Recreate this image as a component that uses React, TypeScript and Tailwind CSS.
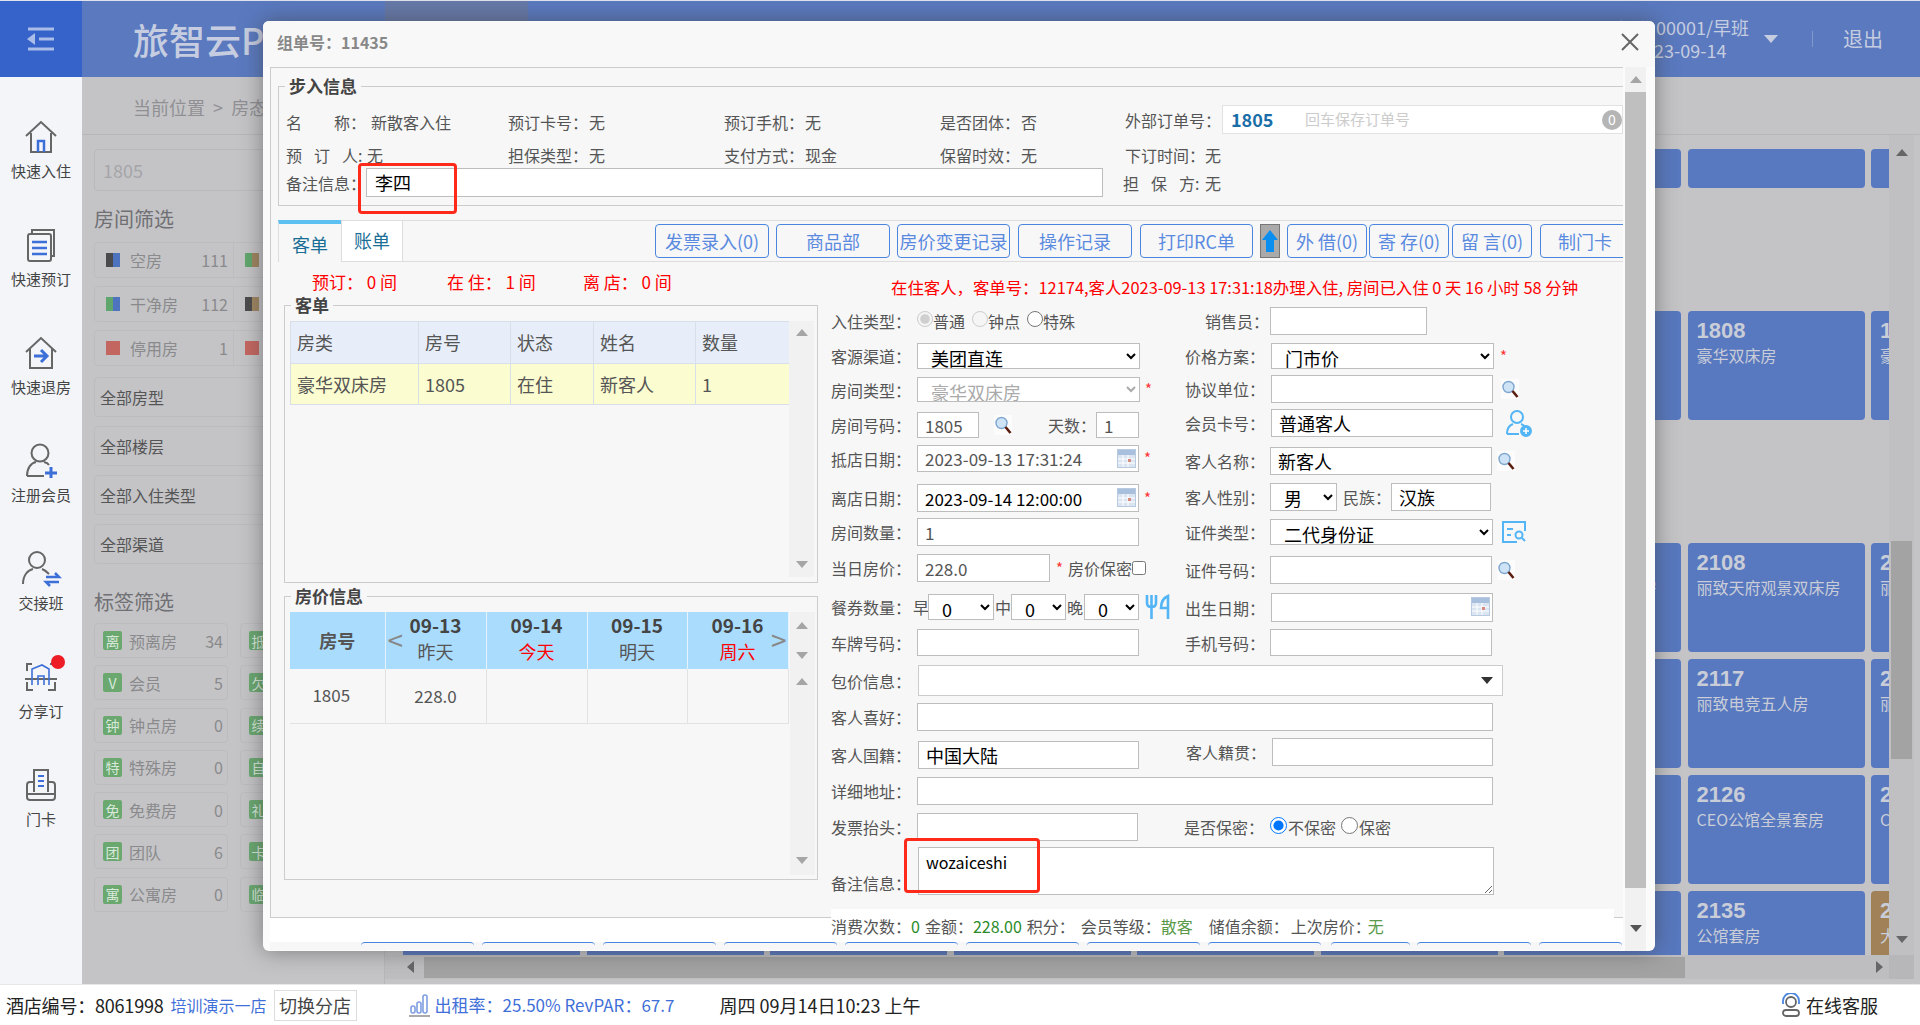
import React from 'react';

const FONT = { fontFamily: '"Noto Sans CJK SC", "Noto Sans", sans-serif' };

const inputCls =
  'h-full border border-[#bdbdbd] bg-white px-[7px] text-[17px] leading-none text-[#555] outline-none';
const selectBase = 'h-full border border-[#bdbdbd] bg-white pl-[9px] text-[18px] leading-none outline-none';
const selectCls = `${selectBase} text-black`;

const sideIcons: Record<string, React.ReactNode> = {
  home: (
    <svg width="34" height="34" viewBox="0 0 34 34" fill="none" stroke="#666" strokeWidth="2">
      <path d="M2 16 17 2l15 14M7 13v19h20V13" />
      <path d="M14 32V21h6v11" stroke="#3d6fd8" strokeWidth="2.5" />
    </svg>
  ),
  book: (
    <svg width="30" height="34" viewBox="0 0 30 34" fill="none" stroke="#666" strokeWidth="2">
      <path d="M6 5V2h22v26h-3" />
      <rect x="2" y="6" width="23" height="27" rx="2" />
      <path d="M6 14h15M6 20h15M6 26h15" stroke="#3d6fd8" strokeWidth="2.5" />
    </svg>
  ),
  out: (
    <svg width="34" height="34" viewBox="0 0 34 34" fill="none" stroke="#666" strokeWidth="2">
      <path d="M2 16 17 2l15 14M6 13v19h22V13" />
      <path d="M10 20h12M17 14l6 6-6 6" stroke="#3d6fd8" strokeWidth="3" />
    </svg>
  ),
  member: (
    <svg width="34" height="36" viewBox="0 0 34 36" fill="none" stroke="#666" strokeWidth="2">
      <circle cx="16" cy="10" r="8.5" />
      <path d="M3 33c0-8 4-13 9-14M20 19c2 .5 4 1.5 5 3M3 33h17" />
      <path d="M27 24v11M21 30h12" stroke="#3d6fd8" strokeWidth="3" />
    </svg>
  ),
  shift: (
    <svg width="42" height="36" viewBox="0 0 42 36" fill="none" stroke="#666" strokeWidth="2">
      <circle cx="17" cy="9" r="8" />
      <path d="M3 33c0-9 5-14 10-15M22 18c3 1 5 3 7 5" />
      <path d="M26 26h13l-4-4M39 31H26l4 4" stroke="#3d6fd8" strokeWidth="2.5" />
    </svg>
  ),
  share: (
    <svg width="34" height="32" viewBox="0 0 34 32" fill="none" stroke="#666" strokeWidth="2">
      <path d="M8 3H3v7M3 21v8h6M24 29h7v-8M30 6V3h-4M1 18h32" />
      <path d="M8 24V8l10-4 7 4v16M14 24v-9h6v9" stroke="#3d6fd8" strokeWidth="1.6" />
    </svg>
  ),
  card: (
    <svg width="34" height="34" viewBox="0 0 34 34" fill="none" stroke="#666" strokeWidth="2">
      <path d="M10 24V2h14v22" />
      <path d="M10 14H6q-3 0-3 3v12q0 3 3 3h22q3 0 3-3V17q0-3-3-3h-4M3 26h28" />
      <path d="M14 8h6M14 13h6M14 18h6" stroke="#3d6fd8" strokeWidth="2" />
    </svg>
  ),
};

const sideItems = [
  ['home', '快速入住'],
  ['book', '快速预订'],
  ['out', '快速退房'],
  ['member', '注册会员'],
  ['shift', '交接班'],
  ['share', '分享订'],
  ['card', '门卡'],
];

const statusRows = [
  ['bg-[#4b4b4d]', 'bg-[#4e74c0]', '空房', '111', 'bg-[#5fa66c]', 'bg-[#9f8560]'],
  ['bg-[#5fa66c]', 'bg-[#4e74c0]', '干净房', '112', 'bg-[#4b4b4d]', 'bg-[#9f8560]'],
  ['bg-[#c46660]', 'bg-[#c46660]', '停用房', '1', 'bg-[#c46660]', 'bg-[#c46660]'],
];

const tagRows = [
  ['离', '预离房', '34', '抵'],
  ['V', '会员', '5', '欠'],
  ['钟', '钟点房', '0', '续'],
  ['特', '特殊房', '0', '自'],
  ['免', '免费房', '0', '礼'],
  ['团', '团队', '6', '卡'],
  ['寓', '公寓房', '0', '临'],
];

function SearchIcon() {
  return (
    <svg width="18" height="20" viewBox="0 0 18 20" className="shrink-0">
      <rect width="18" height="20" fill="#fff" opacity="0.6" />
      <circle cx="7.5" cy="8" r="5.5" fill="#cfe3f6" stroke="#7ea6cf" strokeWidth="1.4" />
      <path d="m11.5 12 5 6" stroke="#5a1d0e" strokeWidth="2.6" />
    </svg>
  );
}

function CalendarIcon() {
  return (
    <svg width="19" height="19" viewBox="0 0 19 19" className="absolute right-[3px] top-[4px]">
      <rect x="0.5" y="0.5" width="18" height="18" fill="#dbe5f1" stroke="#b8cadf" />
      <rect x="1" y="1" width="17" height="5" fill="#a8c0de" />
      <path d="M1 10h17M1 14h17M6 6v12M11 6v12" stroke="#fff" strokeWidth="1" />
      <rect x="11" y="10" width="3" height="3" fill="#d98a80" />
    </svg>
  );
}

function Arrow({ dir, color = '#a5a5a5' }: { dir: 'up' | 'down' | 'left' | 'right'; color?: string }) {
  const d = { up: 'M0 9 6 2l6 7z', down: 'M0 2h12L6 9z', left: 'M9 0v12L2 6z', right: 'M2 0v12l7-6z' }[dir];
  return (
    <svg width="12" height="12" viewBox="0 0 12 12">
      <path d={d} fill={color} />
    </svg>
  );
}

function Info({ label, value, w, lw }: { label: React.ReactNode; value?: string; w: string; lw: string }) {
  return (
    <div className={`flex items-center ${w}`}>
      <span className={`shrink-0 whitespace-nowrap ${lw}`}>{label}</span>
      <span>{value}</span>
    </div>
  );
}

function Row({
  label,
  className,
  children,
  labelCls = 'w-[86px]',
}: {
  label: string;
  className: string;
  children: React.ReactNode;
  labelCls?: string;
}) {
  return (
    <div className={`flex items-center ${className}`}>
      <span className={`shrink-0 whitespace-nowrap text-[16px] text-[#555] ${labelCls}`}>{label}：</span>
      {children}
    </div>
  );
}

const Star = ({ cls = 'ml-[5px]' }: { cls?: string }) => <span className={`${cls} text-[15px] text-[#f33]`}>*</span>;

function Legend({ children }: { children: React.ReactNode }) {
  return <legend className="ml-[6px] px-[4px] text-[17px] font-bold leading-[24px] text-[#444]">{children}</legend>;
}

function Track({ cls, children }: { cls: string; children: React.ReactNode }) {
  return <div className={`flex w-[25px] flex-col items-center bg-[#f1f1f1] ${cls}`}>{children}</div>;
}

const roomCols = [
  { date: '09-13', sub: '昨天', red: false },
  { date: '09-14', sub: '今天', red: true },
  { date: '09-15', sub: '明天', red: false },
  { date: '09-16', sub: '周六', red: true },
];

const actionBtns = [
  ['发票录入(0)', 'ml-[252px] w-[114px]'],
  ['商品部', 'ml-[7px] w-[114px]'],
  ['房价变更记录', 'ml-[7px] w-[113px]'],
  ['操作记录', 'ml-[8px] w-[114px]'],
  ['打印RC单', 'ml-[8px] w-[113px]'],
];
const actionBtns2 = [
  ['外 借(0)', 'ml-[7px] w-[80px]'],
  ['寄 存(0)', 'ml-[2px] w-[80px]'],
  ['留 言(0)', 'ml-[3px] w-[80px]'],
  ['制门卡', 'ml-[8px] w-[90px]'],
];

const lowerBtns = [
  'ml-[91px] w-[113px]',
  'ml-[8px] w-[113px]',
  'ml-[8px] w-[113px]',
  'ml-[8px] w-[113px]',
  'ml-[8px] w-[113px]',
  'ml-[8px] w-[113px]',
  'ml-[8px] w-[113px]',
  'ml-[8px] w-[113px]',
  'ml-[10px] w-[79px]',
  'ml-[7px] w-[114px]',
  'ml-[8px] w-[83px]',
];

function Dialog() {
  return (
    <div className="absolute left-[263px] top-[21px] h-[930px] w-[1392px] overflow-hidden rounded-[6px] bg-[#fbfbfb] shadow-[0_0_22px_rgba(60,60,60,0.55)]">
      {/* title */}
      <div className="flex h-[46px] items-center justify-between bg-[#f8f8f8] pb-[4px] pl-[14px] pr-[15px]">
        <span className="text-[16px] font-bold text-[#888]">组单号：11435</span>
        <svg width="20" height="20" viewBox="0 0 20 20" stroke="#666" strokeWidth="2">
          <path d="m2 2 16 16M18 2 2 18" />
        </svg>
      </div>

      <div className="flex">
        <div className="ml-[7px] w-[1353px]">
          {/* frame */}
          <div className="h-[851px] w-[1353px] overflow-hidden border-l border-t border-b border-[#ccc] bg-[#f7f7f7]">
            <fieldset className="ml-[7px] mt-[6px] h-[132px] w-[1350px] border-t border-b border-l border-[#ccc] text-[16px] text-[#555]">
              <Legend>步入信息</Legend>
              <div className="flex h-[36px] pl-[7px] pt-[11px]">
                <Info label="名　　称：" value="新散客入住" w="w-[222px]" lw="w-[85px]" />
                <Info label="预订卡号：" value="无" w="w-[216px]" lw="w-[81px]" />
                <Info label="预订手机：" value="无" w="w-[216px]" lw="w-[81px]" />
                <Info label="是否团体：" value="否" w="w-[185px]" lw="w-[81px]" />
                <div className="-mt-[4px] flex items-center">
                  <span className="w-[97px] whitespace-nowrap">外部订单号：</span>
                  <div className="flex h-[29px] w-[401px] items-center border border-[#e2e2e2] bg-white pl-[8px]">
                    <span className="w-[74px] text-[18px] font-bold text-[#1a6ea8]">1805</span>
                    <span className="text-[15px] text-[#ccc]">回车保存订单号</span>
                    <span className="ml-auto flex h-[20px] w-[20px] items-center justify-center rounded-full bg-[#b5b5b5] text-[14px] text-white">
                      0
                    </span>
                  </div>
                </div>
              </div>
              <div className="flex h-[32px] pl-[7px] pt-[9px]">
                <Info
                  label={
                    <>
                      <span className="tracking-[12px]">预订</span>人:
                    </>
                  }
                  value="无"
                  w="w-[222px]"
                  lw="w-[81px]"
                />
                <Info label="担保类型：" value="无" w="w-[216px]" lw="w-[81px]" />
                <Info label="支付方式：" value="现金" w="w-[216px]" lw="w-[81px]" />
                <Info label="保留时效：" value="无" w="w-[185px]" lw="w-[81px]" />
                <Info label="下订时间：" value="无" w="w-[160px]" lw="w-[80px]" />
              </div>
              <div className="mt-[2px] flex h-[29px] items-center pl-[7px]">
                <span className="w-[80px] whitespace-nowrap">备注信息：</span>
                <div className="flex h-full w-[737px] items-center border border-[#bdbdbd] bg-white pl-[8px] text-[18px] text-black">
                  李四
                </div>
                <Info
                  label={
                    <>
                      <span className="tracking-[12px]">担保</span>方:
                    </>
                  }
                  value="无"
                  w="ml-[20px] w-[160px]"
                  lw="w-[82px]"
                />
              </div>
            </fieldset>

            {/* tabs and action buttons */}
            <div className="ml-[7px] mt-[14px] flex h-[42px] border-b border-t border-[#ddd]">
              <div className="-mb-px -mt-px flex w-[63px] shrink-0 items-center justify-center border-t-[4px] border-l border-[#5cc0f0] border-l-[#ddd] bg-[#f7f7f7] pt-[3px] text-[18px] text-[#1a6e96]">
                客单
              </div>
              <div className="flex w-[62px] shrink-0 items-center justify-center border-l border-r border-[#ddd] bg-white pb-[2px] text-[18px] text-[#1a6e96]">
                账单
              </div>
              {actionBtns.map(([t, cls]) => (
                <div
                  key={t}
                  className={`mt-[3px] flex h-[34px] shrink-0 items-center justify-center whitespace-nowrap rounded-[4px] border border-[#4a86e0] text-[18px] text-[#5a8ae0] ${cls}`}
                >
                  {t}
                </div>
              ))}
              <div className="ml-[7px] mt-[3px] flex h-[34px] w-[20px] shrink-0 items-center justify-center border border-[#777] bg-[#aaa]">
                <svg width="16" height="24" viewBox="0 0 16 24">
                  <path d="M8 1 16 11h-4v12H4V11H0z" fill="#0a8ef0" />
                </svg>
              </div>
              {actionBtns2.map(([t, cls]) => (
                <div
                  key={t}
                  className={`mt-[3px] flex h-[34px] shrink-0 items-center justify-center whitespace-nowrap rounded-[4px] border border-[#4a86e0] text-[18px] text-[#5a8ae0] ${cls}`}
                >
                  {t}
                </div>
              ))}
            </div>

            <div className="flex">
              {/* left column */}
              <div className="w-[547px] shrink-0 pl-[13px]">
                <div className="flex h-[31px] items-end pl-[28px] text-[17px] leading-[22px] text-[#f00]">
                  <span className="w-[135px]">预订： 0 间</span>
                  <span className="w-[136px]">在 住： 1 间</span>
                  <span>离 店： 0 间</span>
                </div>
                <fieldset className="h-[290px] w-[534px] border border-[#ccc]">
                  <Legend>客单</Legend>
                  <div className="flex pl-[5px] pt-[4px]">
                    <table className="h-[83px] w-[499px] table-fixed border-collapse self-start text-[18px] text-[#555]">
                      <colgroup>
                        <col className="w-[128px]" />
                        <col className="w-[92px]" />
                        <col className="w-[83px]" />
                        <col className="w-[102px]" />
                        <col className="w-[94px]" />
                      </colgroup>
                      <thead>
                        <tr className="h-[42px] bg-[#e7eef9]">
                          {['房类', '房号', '状态', '姓名', '数量'].map((h) => (
                            <th key={h} className="border border-[#d9dfe8] pl-[6px] text-left font-normal">
                              {h}
                            </th>
                          ))}
                        </tr>
                      </thead>
                      <tbody>
                        <tr className="h-[41px] bg-[#fbfccf]">
                          {['豪华双床房', '1805', '在住', '新客人', '1'].map((c) => (
                            <td key={c} className="whitespace-nowrap border border-[#d9dfe8] pl-[6px]">
                              {c}
                            </td>
                          ))}
                        </tr>
                      </tbody>
                    </table>
                    <Track cls="-ml-px h-[256px] justify-between py-[6px]">
                      <Arrow dir="up" />
                      <Arrow dir="down" />
                    </Track>
                  </div>
                </fieldset>
                <fieldset className="mt-[1px] h-[296px] w-[534px] border border-[#ccc]">
                  <Legend>房价信息</Legend>
                  <div className="flex pl-[5px] pt-[4px]">
                    <table className="h-[111px] w-[498px] table-fixed border-collapse self-start text-[#555]">
                      <colgroup>
                        <col className="w-[95px]" />
                        <col className="w-[101px]" />
                        <col className="w-[101px]" />
                        <col className="w-[100px]" />
                        <col className="w-[101px]" />
                      </colgroup>
                      <thead>
                        <tr className="h-[57px] bg-[#aadcfd]">
                          <th className="border-r border-[#e4f3fe] text-[18px] font-bold">房号</th>
                          {roomCols.map((c, i) => (
                            <th
                              key={c.date}
                              className="relative border-r border-[#e4f3fe] text-center align-top text-[18px] font-normal leading-[26px]"
                            >
                              <div className="text-[19px] font-bold text-[#444]">{c.date}</div>
                              <div className={c.red ? 'text-[#f00]' : 'text-[#555]'}>{c.sub}</div>
                              {i === 0 && (
                                <span className="absolute left-[2px] top-[13px] text-[28px] leading-[28px] text-[#888]">
                                  &lt;
                                </span>
                              )}
                              {i === 3 && (
                                <span className="absolute right-[1px] top-[13px] text-[28px] leading-[28px] text-[#888]">
                                  &gt;
                                </span>
                              )}
                            </th>
                          ))}
                        </tr>
                      </thead>
                      <tbody>
                        <tr className="h-[54px] border-b border-[#e2e2e2] text-[17px]">
                          <td className="border-r border-[#e2e2e2] pb-[2px] pr-[12px] text-center">1805</td>
                          <td className="border-r border-[#e2e2e2] text-center">228.0</td>
                          <td className="border-r border-[#e2e2e2]" />
                          <td className="border-r border-[#e2e2e2]" />
                          <td className="border-r border-[#e2e2e2]" />
                        </tr>
                      </tbody>
                    </table>
                    <Track cls="ml-px h-[263px] pt-[8px]">
                      <Arrow dir="up" />
                      <div className="mt-[18px]">
                        <Arrow dir="down" />
                      </div>
                      <div className="mt-[14px]">
                        <Arrow dir="up" />
                      </div>
                      <div className="mt-auto pb-[8px]">
                        <Arrow dir="down" />
                      </div>
                    </Track>
                  </div>
                </fieldset>
              </div>

              {/* right column */}
              <div className="w-[800px] shrink-0 pl-[13px]">
                <div className="flex h-[36px] items-end whitespace-nowrap pl-[60px] text-[16.4px] leading-[22px] text-[#f00]">
                  在住客人，客单号：12174,客人2023-09-13 17:31:18办理入住, 房间已入住 0 天 16 小时 58 分钟
                </div>
                <div className="mt-[9px] flex">
                  <div className="w-[354px]">
                    <Row label="入住类型" className="h-[28px]">
                      <div className="flex items-center text-[16px] text-[#555]">
                        <input type="radio" disabled defaultChecked name="t" className="m-0 mb-[4px] h-[16px] w-[16px]" />
                        <span className="w-[39px]">普通</span>
                        <input type="radio" disabled name="t" className="m-0 mb-[4px] h-[16px] w-[16px]" />
                        <span className="w-[39px]">钟点</span>
                        <input type="radio" name="t2" className="m-0 mb-[4px] h-[16px] w-[16px]" />
                        <span>特殊</span>
                      </div>
                    </Row>
                    <Row label="客源渠道" className="mt-[8px] h-[26px]">
                      <select className={`${selectCls} w-[223px]`} defaultValue="美团直连">
                        <option>美团直连</option>
                      </select>
                    </Row>
                    <Row label="房间类型" className="mt-[8px] h-[25px]">
                      <select disabled className={`${selectBase} w-[223px] text-[#aaa]`} defaultValue="豪华双床房">
                        <option>豪华双床房</option>
                      </select>
                      <Star />
                    </Row>
                    <Row label="房间号码" className="mt-[10px] h-[26px]">
                      <input readOnly value="1805" className={`${inputCls} w-[62px]`} />
                      <div className="ml-[15px]">
                        <SearchIcon />
                      </div>
                      <span className="ml-[36px] w-[48px] whitespace-nowrap text-[16px] text-[#555]">天数：</span>
                      <input readOnly value="1" className={`${inputCls} w-[43px]`} />
                    </Row>
                    <Row label="抵店日期" className="mt-[7px] h-[27px]">
                      <div className="relative h-full w-[222px]">
                        <input readOnly value="2023-09-13 17:31:24" className={`${inputCls} w-full text-[16px]`} />
                        <CalendarIcon />
                      </div>
                      <Star />
                    </Row>
                    <Row label="离店日期" className="mt-[12px] h-[28px]">
                      <div className="relative h-full w-[222px]">
                        <input
                          readOnly
                          value="2023-09-14 12:00:00"
                          className={`${inputCls} w-full border-[#777] text-[16px] text-black`}
                        />
                        <CalendarIcon />
                      </div>
                      <Star />
                    </Row>
                    <Row label="房间数量" className="mt-[6px] h-[28px]">
                      <input readOnly value="1" className={`${inputCls} w-[222px]`} />
                    </Row>
                    <Row label="当日房价" className="mt-[8px] h-[28px]">
                      <input readOnly value="228.0" className={`${inputCls} w-[133px]`} />
                      <Star cls="ml-[6px]" />
                      <span className="ml-[5px] whitespace-nowrap text-[16px] text-[#555]">房价保密</span>
                      <input type="checkbox" className="m-0 h-[14px] w-[14px]" />
                    </Row>
                    <Row label="餐券数量" labelCls="w-[82px]" className="mt-[12px] h-[26px] text-[16px] text-[#555]">
                      <span className="w-[15px]">早</span>
                      <select className={`${selectCls} w-[66px]`}>
                        <option>0</option>
                      </select>
                      <span className="ml-px w-[16px]">中</span>
                      <select className={`${selectCls} w-[55px]`}>
                        <option>0</option>
                      </select>
                      <span className="ml-px w-[17px]">晚</span>
                      <select className={`${selectCls} w-[55px]`}>
                        <option>0</option>
                      </select>
                      <svg width="27" height="26" viewBox="0 0 27 26" fill="none" stroke="#53b5f5" strokeWidth="2.6" className="ml-[6px]">
                        <path d="M2 1v8q0 4 4.500 4t4.500-4V1M6.500 1v24M23 25V2q-7 3-7 12h7" />
                      </svg>
                    </Row>
                    <Row label="车牌号码" className="mt-[9px] h-[27px]">
                      <input readOnly value="" className={`${inputCls} w-[222px]`} />
                    </Row>
                  </div>
                  <div className="w-[360px]">
                    <Row label="销售员" labelCls="w-[85px] pl-[20px]" className="h-[28px]">
                      <input readOnly value="" className={`${inputCls} w-[157px]`} />
                    </Row>
                    <Row label="价格方案" className="mt-[8px] h-[26px]">
                      <select className={`${selectCls} w-[223px]`}>
                        <option>门市价</option>
                      </select>
                      <Star cls="ml-[6px]" />
                    </Row>
                    <Row label="协议单位" className="mt-[6px] h-[28px]">
                      <input readOnly value="" className={`${inputCls} w-[222px]`} />
                      <div className="ml-[8px]">
                        <SearchIcon />
                      </div>
                    </Row>
                    <Row label="会员卡号" className="mt-[6px] h-[28px]">
                      <input readOnly value="普通客人" className={`${inputCls} w-[222px] text-[18px] text-black`} />
                      <svg width="28" height="28" viewBox="0 0 28 28" fill="none" stroke="#53b5f5" strokeWidth="2" className="ml-[12px]">
                        <circle cx="12" cy="8" r="6" />
                        <path d="M2 25q0-8 6-10M16 15q3 1 4 3M2 25h12" />
                        <circle cx="21" cy="22" r="5" fill="#53b5f5" />
                        <path d="M21 19v6M18 22h6" stroke="#fff" strokeWidth="1.5" />
                      </svg>
                    </Row>
                    <Row label="客人名称" labelCls="w-[85px]" className="mt-[10px] h-[28px]">
                      <input readOnly value="新客人" className={`${inputCls} w-[222px] text-[18px] text-black`} />
                      <div className="ml-[5px]">
                        <SearchIcon />
                      </div>
                    </Row>
                    <Row label="客人性别" labelCls="w-[85px]" className="mt-[8px] h-[28px] text-[#555]">
                      <select className={`${selectCls} w-[67px]`}>
                        <option>男</option>
                      </select>
                      <span className="ml-[6px] w-[48px] whitespace-nowrap text-[16px]">民族：</span>
                      <input readOnly value="汉族" className={`${inputCls} w-[100px] text-[18px] text-black`} />
                    </Row>
                    <Row label="证件类型" labelCls="w-[85px]" className="mt-[8px] h-[26px]">
                      <select className={`${selectCls} w-[223px]`}>
                        <option>二代身份证</option>
                      </select>
                      <svg width="26" height="26" viewBox="0 0 26 26" fill="none" stroke="#53b5f5" strokeWidth="2" className="ml-[8px]">
                        <path d="M24 12V3H2v20h14" />
                        <path d="M6 10h6M6 16h4" />
                        <circle cx="18" cy="16" r="3.5" />
                        <path d="m21 19 3 3" />
                      </svg>
                    </Row>
                    <Row label="证件号码" labelCls="w-[85px]" className="mt-[11px] h-[28px]">
                      <input readOnly value="" className={`${inputCls} w-[222px]`} />
                      <div className="ml-[5px]">
                        <SearchIcon />
                      </div>
                    </Row>
                    <Row label="出生日期" className="mt-[9px] h-[29px]">
                      <div className="relative h-full w-[222px]">
                        <input readOnly value="" className={`${inputCls} w-full border-[#999]`} />
                        <CalendarIcon />
                      </div>
                    </Row>
                    <Row label="手机号码" labelCls="w-[85px]" className="mt-[7px] h-[27px]">
                      <input readOnly value="" className={`${inputCls} w-[222px]`} />
                    </Row>
                  </div>
                </div>

                <Row label="包价信息" labelCls="w-[87px]" className="mt-[9px] h-[31px]">
                  <div className="flex h-full w-[585px] items-center justify-end border border-[#ccc] bg-white pr-[9px]">
                    <Arrow dir="down" color="#333" />
                  </div>
                </Row>
                <Row label="客人喜好" className="mt-[7px] h-[28px]">
                  <input readOnly value="" className={`${inputCls} w-[576px]`} />
                </Row>
                <div className="mt-[7px] flex h-[31px]">
                  <Row label="客人国籍" labelCls="w-[87px]" className="h-[28px] self-end">
                    <input readOnly value="中国大陆" className={`${inputCls} w-[221px] text-[18px] text-black`} />
                  </Row>
                  <Row label="客人籍贯" labelCls="ml-[47px] w-[86px]" className="h-[28px]">
                    <input readOnly value="" className={`${inputCls} w-[221px]`} />
                  </Row>
                </div>
                <Row label="详细地址" className="mt-[8px] h-[28px]">
                  <input readOnly value="" className={`${inputCls} w-[576px]`} />
                </Row>
                <Row label="发票抬头" className="mt-[8px] h-[28px]">
                  <input readOnly value="" className={`${inputCls} w-[221px]`} />
                  <span className="ml-[46px] w-[86px] whitespace-nowrap text-[16px] text-[#555]">是否保密：</span>
                  <div className="flex items-center text-[16px] text-[#555]">
                    <input type="radio" defaultChecked name="m" className="m-0 mb-[4px] h-[17px] w-[17px]" />
                    <span className="ml-px w-[53px]">不保密</span>
                    <input type="radio" name="m" className="m-0 mb-[4px] h-[17px] w-[17px]" />
                    <span className="ml-px">保密</span>
                  </div>
                </Row>
                <div className="mt-[6px] flex h-[48px] items-end">
                  <span className="w-[87px] whitespace-nowrap text-[16px] text-[#555]">备注信息：</span>
                  <textarea
                    readOnly
                    value="wozaiceshi"
                    className="h-full w-[576px] resize border border-[#bdbdbd] bg-white px-[7px] py-[3px] text-[16px] leading-[22px] text-black outline-none"
                  />
                </div>
              </div>
            </div>
          </div>
          {/* lower strip, buttons cut by the dialog edge */}
          <div className="h-[24px] bg-white" />
          <div className="flex h-[8px] overflow-hidden bg-[#f7f7f7]">
            {lowerBtns.map((cls, i) => (
              <div key={i} className={`h-[20px] shrink-0 rounded-t-[4px] border-t border-[#4a86e0] ${cls}`} />
            ))}
          </div>
        </div>

        {/* dialog scrollbar */}
        <div className="ml-[2px] flex h-[884px] w-[21px] flex-col items-center bg-[#f1f1f1]">
          <div className="flex h-[25px] items-center">
            <Arrow dir="up" />
          </div>
          <div className="h-[796px] w-full bg-[#bfbfbf]" />
          <div className="mt-auto flex h-[44px] items-center">
            <Arrow dir="down" color="#555" />
          </div>
        </div>
      </div>

      {/* summary strip over the frame */}
      <div className="absolute left-[568px] top-[888px] flex h-[33px] w-[783px] items-center whitespace-nowrap bg-white text-[16px] text-[#555]">
        <span>消费次数：</span>
        <span className="text-[#2a8a2a]">0</span>
        <span className="ml-[5px]">金额：</span>
        <span className="text-[#2a8a2a]">228.00</span>
        <span className="ml-[5px] w-[54px]">积分：</span>
        <span>会员等级：</span>
        <span className="text-[#5a9a4a]">散客</span>
        <span className="ml-[16px] w-[82px]">储值余额：</span>
        <span>上次房价：</span>
        <span className="-ml-[3px] text-[#5a9a4a]">无</span>
      </div>

      {/* annotations */}
      <div className="absolute left-[95px] top-[142px] h-[51px] w-[99px] rounded-[4px] border-[3px] border-[#ff2a1a]" />
      <div className="absolute left-[641px] top-[817px] h-[55px] w-[136px] rounded-[4px] border-[3px] border-[#ff2a1a]" />
    </div>
  );
}

const cardRows = [
  { cls: 'mt-0 h-[39px]', cards: [['', ''], ['', ''], ['', '']], brown: false },
  { cls: 'mt-[123px] h-[109px]', cards: [['', ''], ['1808', '豪华双床房'], ['1809', '豪华双床房']], brown: false },
  { cls: 'mt-[123px] h-[109px]', cards: [['2107', '丽致天府观景双床房'], ['2108', '丽致天府观景双床房'], ['2109', '丽致天府']], brown: false },
  { cls: 'mt-[7px] h-[109px]', cards: [['', ''], ['2117', '丽致电竞五人房'], ['2118', '丽致电竞']], brown: false },
  { cls: 'mt-[7px] h-[109px]', cards: [['', ''], ['2126', 'CEO公馆全景套房'], ['2127', 'CEO公馆']], brown: false },
  { cls: 'mt-[7px] h-[109px]', cards: [['', ''], ['2135', '公馆套房'], ['2136', '大床房']], brown: true },
];

function RoomCard({ no, name, brown }: { no: string; name: string; brown?: boolean }) {
  return (
    <div className={`h-full overflow-hidden rounded-[4px] pl-[9px] pt-[7px] text-[#c9cdd8] ${brown ? 'bg-[#a08158]' : 'bg-[#5878bf]'}`}>
      <div className="text-[22px] font-bold leading-[26px]" style={{ fontFamily: '"Liberation Sans", sans-serif' }}>
        {no}
      </div>
      <div className="whitespace-nowrap text-[16px] leading-[22px]">{name}</div>
    </div>
  );
}

export default function App() {
  return (
    <div className="relative h-[1025px] w-[1920px] overflow-hidden bg-white" style={FONT}>
      <div className="h-px bg-[#dfe3ee]" />
      <div className="flex h-[983px]">
        {/* side nav */}
        <aside className="w-[82px] shrink-0 bg-[#f3f5f9]">
          <div className="flex h-[76px] items-center justify-center bg-[#3563c9]">
            <svg width="30" height="24" viewBox="0 0 30 24" fill="none" stroke="#a9bde8" strokeWidth="3">
              <path d="M2 2h26M13 12h15M2 22h26" />
              <path d="M9 6v12l-8-6z" fill="#a9bde8" stroke="none" />
            </svg>
          </div>
          <div className="mt-[38px]">
            {sideItems.map(([key, label]) => (
              <div key={key} className="relative flex h-[108px] flex-col items-center pt-[4px]">
                <div className="relative flex h-[36px] items-center justify-center">
                  {sideIcons[key]}
                  {key === 'share' && (
                    <span className="absolute -right-[7px] -top-[4px] h-[14px] w-[14px] rounded-full bg-[#ee1c25]" />
                  )}
                </div>
                <span className="mt-[5px] whitespace-nowrap text-[15px] leading-[22px] text-[#444]">{label}</span>
              </div>
            ))}
          </div>
        </aside>

        <main className="flex w-[1838px] flex-col bg-[#c4c4c7]">
          {/* header */}
          <header className="flex h-[76px] shrink-0 items-stretch bg-[#5a79bf] text-[#c6cde0]">
            <div className="flex w-[303px] items-center pl-[51px] text-[36px] font-medium">旅智云PMS</div>
            <div className="h-[20px] w-[143px] bg-[#6679a8]" />
            <div className="ml-auto flex items-center pr-[37px]">
              <div className="w-[115px] text-[18px] leading-[23px]">
                <div className="-ml-[40px] whitespace-nowrap pl-[1px] text-right">admin00001/早班</div>
                <div>2023-09-14</div>
              </div>
              <svg width="14" height="8" viewBox="0 0 14 8" className="ml-[15px]">
                <path d="M0 0h14L7 8z" fill="#c6cde0" />
              </svg>
              <div className="ml-[34px] h-[16px] w-px bg-[#8298cc]" />
              <span className="ml-[30px] text-[20px]">退出</span>
            </div>
          </header>

          {/* breadcrumb */}
          <div className="flex h-[58px] shrink-0 items-center whitespace-pre border-b border-[#b7b7ba] pl-[51px] pt-[4px] text-[18px] text-[#909094]">
            当前位置{'  >  '}房态
          </div>

          <div className="flex min-h-0 flex-1">
            {/* filters */}
            <section className="w-[303px] shrink-0 border-r border-[#b7b7ba] pl-[12px] text-[#8a8a8c]">
              <div className="mt-[14px] flex h-[42px] w-[280px] items-center rounded-[4px] border border-[#b9b9bc] pl-[8px] text-[18px] text-[#a5a5a8]">
                1805
              </div>
              <div className="mt-[13px] flex h-[30px] items-center text-[20px] text-[#707074]">房间筛选</div>
              <div className="mt-[8px] flex flex-col gap-[8px]">
                {statusRows.map(([a, b, name, n, c, d]) => (
                  <div key={name} className="flex h-[36px] w-[280px] rounded-[4px] border border-[#bcbcbf]">
                    <div className="flex w-[139px] items-center border-r border-[#bcbcbf] pl-[11px] text-[16px]">
                      <span className={`h-[14px] w-[7px] ${a}`} />
                      <span className={`h-[14px] w-[7px] ${b}`} />
                      <span className="ml-[10px]">{name}</span>
                      <span className="ml-auto pr-[5px]">{n}</span>
                    </div>
                    <div className="flex items-center pl-[11px]">
                      <span className={`h-[14px] w-[7px] ${c}`} />
                      <span className={`h-[14px] w-[7px] ${d}`} />
                    </div>
                  </div>
                ))}
              </div>
              <div className="mt-[11px] flex flex-col gap-[9px]">
                {['全部房型', '全部楼层', '全部入住类型', '全部渠道'].map((t) => (
                  <div key={t} className="flex h-[40px] w-[280px] items-center rounded-[4px] border border-[#bcbcbf] pl-[5px] text-[16px] text-[#555]">
                    {t}
                  </div>
                ))}
              </div>
              <div className="mt-[23px] flex h-[30px] items-center text-[20px] text-[#707074]">标签筛选</div>
              <div className="mt-[6px] flex flex-col gap-[7.3px]">
                {tagRows.map(([g, name, n, g2]) => (
                  <div key={name} className="flex h-[35px] gap-[12px]">
                    <div className="flex w-[134px] items-center rounded-[4px] border border-[#bcbcbf] pl-[8px] text-[16px]">
                      <span className="flex h-[19px] w-[19px] items-center justify-center rounded-[2px] bg-[#6aa870] text-[14px] leading-none text-[#d8e8da]">
                        {g}
                      </span>
                      <span className="ml-[7px]">{name}</span>
                      <span className="ml-auto pr-[4px]">{n}</span>
                    </div>
                    <div className="flex w-[134px] items-center rounded-[4px] border border-[#bcbcbf] pl-[8px]">
                      <span className="flex h-[19px] w-[19px] items-center justify-center rounded-[2px] bg-[#6aa870] text-[14px] leading-none text-[#d8e8da]">
                        {g2}
                      </span>
                    </div>
                  </div>
                ))}
              </div>
            </section>

            {/* room grid */}
            <section className="flex min-w-0 flex-1 flex-col">
              <div className="flex h-[820px] shrink-0">
                <div className="w-[1504px] overflow-hidden pl-[18px] pt-[14px]">
                  {cardRows.map((row, r) => (
                    <div key={r} className={`grid w-[1652px] grid-cols-[repeat(9,177px)] gap-x-[6.5px] ${row.cls}`}>
                      {[0, 1, 2, 3, 4, 5].map((i) => (
                        <div key={i} className="h-full rounded-[4px] bg-[#5878bf]" />
                      ))}
                      {row.cards.map(([no, name], i) => (
                        <RoomCard key={i} no={no} name={name} brown={row.brown && i === 2} />
                      ))}
                    </div>
                  ))}
                </div>
                <div className="flex w-[25px] flex-col items-center bg-[#c0c0c2]">
                  <div className="mt-[8px] flex h-[20px] items-center">
                    <Arrow dir="up" color="#666" />
                  </div>
                  <div className="mt-[378px] h-[218px] w-[21px] bg-[#a3a3a3]" />
                  <div className="mt-auto mb-[9px]">
                    <Arrow dir="down" color="#666" />
                  </div>
                </div>
              </div>
              <div className="flex h-[24px] w-[1529px] items-center bg-[#bebec0]">
                <div className="ml-[20px] w-[19px]">
                  <Arrow dir="left" color="#666" />
                </div>
                <div className="h-[21px] w-[1261px] bg-[#a3a3a3]" />
                <div className="ml-[189px]">
                  <Arrow dir="right" color="#666" />
                </div>
                <div className="ml-auto h-full w-[25px] bg-[#b7b7b9]" />
              </div>
            </section>
          </div>
        </main>
      </div>

      {/* status bar */}
      <footer className="flex h-[41px] items-center whitespace-nowrap border-t border-[#e8e8e8] bg-white text-[18px] text-[#222]">
        <span className="ml-[6px] tracking-[-0.2px]">酒店编号：8061998</span>
        <span className="ml-[7px] text-[16px] text-[#3f6fd8]">培训演示一店</span>
        <span className="ml-[7px] flex h-[31px] w-[83px] items-center justify-center border border-[#ddd] text-[18px] text-[#444]">切换分店</span>
        <svg width="21" height="24" viewBox="0 0 21 24" fill="none" stroke="#7f9fe0" strokeWidth="1.6" className="ml-[52px]">
          <rect x="2" y="13" width="4" height="7" rx="2" />
          <rect x="8" y="9" width="4" height="11" rx="2" />
          <rect x="14" y="2" width="4" height="18" rx="2" />
          <path d="M0 23h21" strokeWidth="2" stroke="#aaa" />
        </svg>
        <span className="ml-[5px] text-[17px] text-[#3f6fd8]">出租率：25.50% RevPAR：67.7</span>
        <span className="ml-[45px]">周四 09月14日10:23 上午</span>
        <svg width="20" height="24" viewBox="0 0 20 24" fill="none" strokeWidth="1.8" className="ml-auto">
          <circle cx="10" cy="9" r="5" stroke="#666" />
          <path d="M2 11V8a8 8 0 0 1 16 0v3" stroke="#4a86e0" />
          <rect x="2" y="17" width="16" height="6" rx="3" stroke="#666" />
        </svg>
        <span className="ml-[5px] mr-[42px]">在线客服</span>
      </footer>

      <Dialog />
    </div>
  );
}
